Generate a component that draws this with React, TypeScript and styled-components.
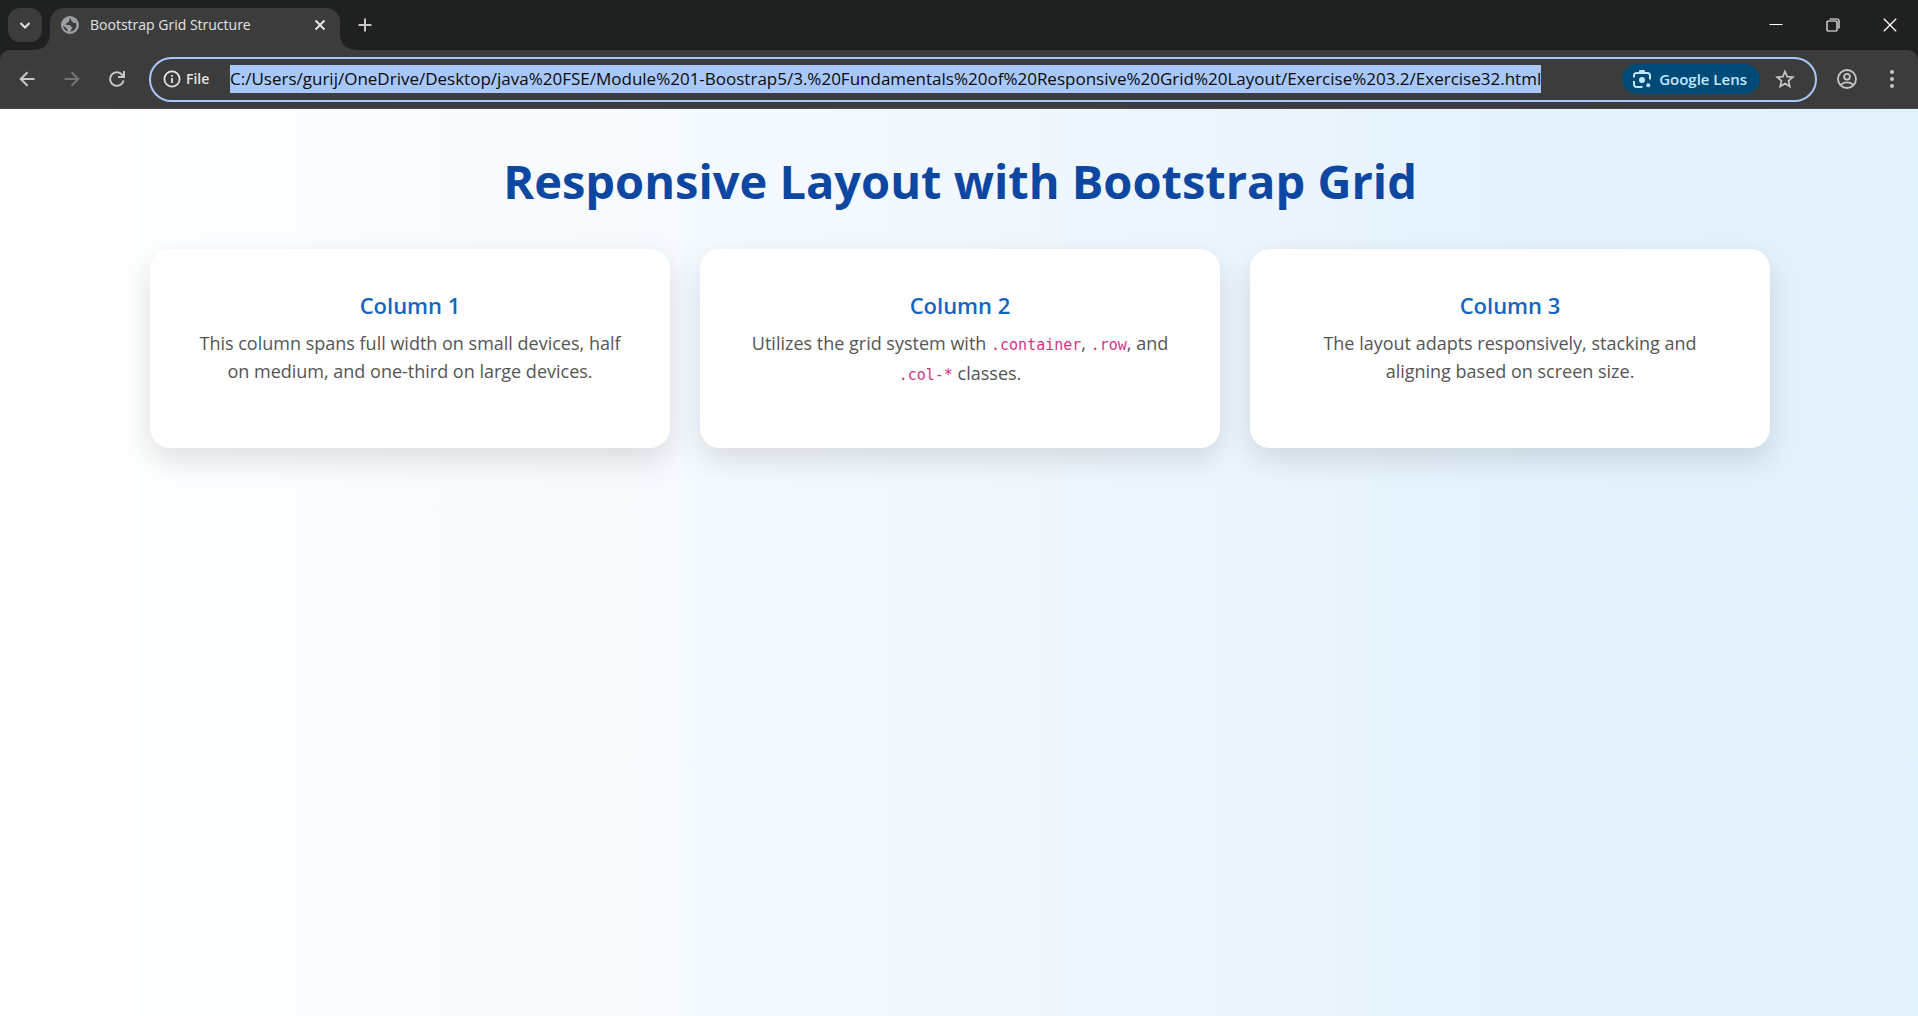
import React, { useEffect, useRef } from "react";
import styled, { createGlobalStyle } from "styled-components";

const GlobalStyle = createGlobalStyle`
  *, *::before, *::after { box-sizing: border-box; }
  html, body, #root { height: 100%; margin: 0; }
  body { font-family: "Open Sans", "Noto Sans", sans-serif; }
  h1, h2, p { margin: 0; }
`;

const Window = styled.div`
  display: flex;
  flex-direction: column;
  min-height: 100%;
`;

const TabStrip = styled.header`
  display: flex;
  align-items: flex-end;
  height: 50px;
  padding-left: 8px;
  background: #1f2120;
`;

const IconButton = styled.button<{ $size?: number; $color?: string; $bg?: string }>`
  display: flex;
  align-items: center;
  justify-content: center;
  flex: none;
  width: ${(p) => p.$size ?? 34}px;
  height: ${(p) => p.$size ?? 34}px;
  padding: 0;
  border: 0;
  border-radius: 12px;
  background: ${(p) => p.$bg ?? "transparent"};
  color: ${(p) => p.$color ?? "#c7c7c7"};
`;

const TabSearch = styled(IconButton)`
  align-self: center;
`;

const Tab = styled.div`
  position: relative;
  display: flex;
  align-items: center;
  gap: 11px;
  width: 290px;
  height: 42px;
  margin-left: 8px;
  padding: 0 8px 8px 11px;
  border-radius: 14px 14px 0 0;
  background: #3c3c3c;
  color: #e3e3e3;
  font-size: 14px;
  line-height: 20px;

  &::before,
  &::after {
    content: "";
    position: absolute;
    bottom: 0;
    width: 14px;
    height: 14px;
  }
  &::before {
    right: 100%;
    background: radial-gradient(circle at 0 0, transparent 13px, #3c3c3c 14px);
  }
  &::after {
    left: 100%;
    background: radial-gradient(circle at 100% 0, transparent 13px, #3c3c3c 14px);
  }
`;

const TabTitle = styled.span`
  flex: 1;
  white-space: nowrap;
`;

const NewTab = styled(IconButton)`
  align-self: center;
  margin-left: 8px;
`;

const WindowControls = styled.div`
  display: flex;
  align-self: stretch;
  margin-left: auto;
`;

const WindowButton = styled.button`
  display: flex;
  align-items: center;
  justify-content: center;
  width: 57px;
  padding: 0;
  border: 0;
  background: transparent;
  color: #ffffff;
`;

const Toolbar = styled.div`
  background: #1f2120;
`;

const ToolbarInner = styled.div`
  display: flex;
  align-items: center;
  gap: 11px;
  height: 59px;
  padding: 0 9px 0 10px;
  border-bottom: 1px solid #4a4a4a;
  border-radius: 10px 10px 0 0;
  background: #3c3c3c;
`;

const AddressBar = styled.div`
  display: flex;
  flex: 1;
  align-items: center;
  height: 45px;
  margin: 0 2px 0 4px;
  padding: 0 13px 0 12px;
  border: 2px solid #a8c7fa;
  border-radius: 23px;
`;

const Scheme = styled.label`
  display: flex;
  align-items: center;
  gap: 5px;
  width: 67px;
  color: #e3e3e3;
  font-size: 14px;
  font-weight: 600;
  line-height: 20px;
`;

const UrlInput = styled.input`
  flex: 1;
  min-width: 0;
  height: 28px;
  padding: 0;
  border: 0;
  outline: 0;
  background: transparent;
  color: #e3e3e3;
  font: 17px/28px "Open Sans", "Noto Sans", sans-serif;

  &::selection {
    background: #a8c7fa;
    color: #0a0a0a;
  }
`;

const LensButton = styled.button`
  display: flex;
  align-items: center;
  gap: 8px;
  height: 30px;
  padding: 0 13px 0 11px;
  border: 0;
  border-radius: 15px;
  background: #004a77;
  color: #c2e7ff;
  font: 600 15px/20px "Open Sans", "Noto Sans", sans-serif;
  white-space: nowrap;
`;

const StarButton = styled(IconButton)`
  margin-left: 8px;
`;

const Page = styled.main`
  flex: 1;
  padding: 40px 24px 40px 26px;
  background: linear-gradient(90deg, #ffffff 0%, #f1f8fe 50%, #e4f2fc 80%, #e1f1fd 100%);
`;

const Container = styled.div`
  max-width: 1620px;
  margin: 0 auto;
`;

const Title = styled.h1`
  margin-bottom: 36px;
  color: #0d47a1;
  font-size: 47px;
  font-weight: 700;
  line-height: 64px;
  text-align: center;
`;

const Row = styled.div`
  display: grid;
  grid-template-columns: repeat(auto-fit, minmax(320px, 1fr));
  gap: 30px;
`;

const Card = styled.section`
  min-height: 199px;
  padding: 40px;
  border-radius: 20px;
  background: #ffffff;
  box-shadow: 0 12px 30px rgba(0, 0, 0, 0.12);
  text-align: center;
`;

const CardTitle = styled.h2`
  margin-bottom: 8px;
  color: #1565c0;
  font-size: 22px;
  font-weight: 600;
  line-height: 32px;
`;

const CardText = styled.p`
  color: #555555;
  font-size: 18px;
  line-height: 28px;
`;

const Code = styled.code`
  color: #d63384;
  font-family: "DejaVu Sans Mono", monospace;
  font-size: 15px;
`;

const Globe = () => (
  <svg width="18" height="18" viewBox="0 0 18 18" aria-hidden="true">
    <circle cx="9" cy="9" r="9" fill="#9aa0a6" />
    <path
      d="M10 2.2C8.6 2.4 8.2 3.4 8.6 4.3c.3.8-.8 1-1.4 1.4-.5.5-.3 1.2-1 1.500-.5.3-1.500 0-1.600.9 0 .6.8.8 1.600.8h2.500c1 0 1.200.9 1.200 1.600 0 .5 1.500.3 1.500 1.200 0 .8-.8 1.100-1 1.700-.2.9-.8 1.700-1.800 2.300 3.800-.2 6.800-3.200 6.800-6.800 0-.9-.2-1.700-.5-2.400-.8.6-2 .8-2.700.2-.7-.5-.3-1.200-1-1.500-.8-.3-1.200-.5-1.200-1.300z"
      fill="#3c3c3c"
    />
    <path d="M2.200 9.500l3.700 3.200c.6.5.4 1.400.6 2.300l.4.600C4.200 14.800 2.300 12.400 2.200 9.500z" fill="#3c3c3c" />
  </svg>
);

type StrokeProps = { size: number; d: string; width?: number };

const Stroke = ({ size, d, width = 2 }: StrokeProps) => (
  <svg width={size} height={size} viewBox={`0 0 ${size} ${size}`} fill="none" stroke="currentColor" strokeWidth={width} aria-hidden="true">
    <path d={d} />
  </svg>
);

const InfoIcon = () => (
  <svg width="18" height="18" viewBox="0 0 18 18" fill="none" stroke="currentColor" strokeWidth="1.800" aria-hidden="true">
    <circle cx="9" cy="9" r="7.600" />
    <path d="M9 8v5M9 5v1.800" />
  </svg>
);

const ReloadIcon = () => (
  <svg width="18" height="18" viewBox="0 0 18 18" fill="none" stroke="currentColor" strokeWidth="2" aria-hidden="true">
    <path d="M15.500 10.500A6.800 6.800 0 1 1 14.200 4.800L16 6.700" />
    <path d="M16 1v6h-6" />
  </svg>
);

const LensIcon = () => (
  <svg width="18" height="18" viewBox="0 0 18 18" fill="none" stroke="currentColor" strokeWidth="2" aria-hidden="true">
    <path d="M1 7.500V5.500A2.500 2.500 0 0 1 3.500 3h11A2.500 2.500 0 0 1 17 5.500V9.500M1 11v3.500A2.500 2.500 0 0 0 3.500 17H9.500" />
    <path d="M5.500 3l1-3h5l1 3z" fill="currentColor" stroke="none" />
    <circle cx="9" cy="10" r="3" fill="currentColor" stroke="none" />
    <circle cx="15.300" cy="15.300" r="2" fill="currentColor" stroke="none" />
  </svg>
);

const StarIcon = () => (
  <svg width="20" height="20" viewBox="0 0 20 20" fill="none" stroke="currentColor" strokeWidth="1.700" aria-hidden="true">
    <path d="M10 2.500l2.200 5.200 5.600.5-4.300 3.700 1.300 5.500L10 14.500l-4.800 2.900 1.300-5.500-4.300-3.700 5.600-.5z" />
  </svg>
);

const ProfileIcon = () => (
  <svg width="20" height="20" viewBox="0 0 20 20" fill="none" stroke="currentColor" strokeWidth="1.800" aria-hidden="true">
    <circle cx="10" cy="10" r="9" />
    <circle cx="10" cy="7.800" r="2.900" />
    <path d="M3.800 16c3-3.600 9.400-3.600 12.400 0" />
  </svg>
);

const MenuIcon = () => (
  <svg width="20" height="20" viewBox="0 0 20 20" fill="currentColor" aria-hidden="true">
    <circle cx="10" cy="3" r="2" />
    <circle cx="10" cy="10" r="2" />
    <circle cx="10" cy="17" r="2" />
  </svg>
);

const RestoreIcon = () => (
  <svg width="14" height="14" viewBox="0 0 14 14" fill="none" stroke="currentColor" aria-hidden="true">
    <rect x="1" y="3" width="10" height="10" rx="1" strokeWidth="1.200" />
    <path d="M3.500 1H11a2 2 0 0 1 2 2v7.500" strokeWidth="1.200" />
  </svg>
);

const URL_TEXT =
  "C:/Users/gurij/OneDrive/Desktop/java%20FSE/Module%201-Boostrap5/3.%20Fundamentals%20of%20Responsive%20Grid%20Layout/Exercise%203.2/Exercise32.html";

const columns = [
  {
    title: "Column 1",
    body: "This column spans full width on small devices, half on medium, and one-third on large devices.",
  },
  {
    title: "Column 2",
    body: (
      <>
        Utilizes the grid system with <Code>.container</Code>, <Code>.row</Code>, and <Code>.col-*</Code> classes.
      </>
    ),
  },
  {
    title: "Column 3",
    body: "The layout adapts responsively, stacking and aligning based on screen size.",
  },
];

export default function App() {
  const urlRef = useRef<HTMLInputElement>(null);

  useEffect(() => {
    const input = urlRef.current;
    if (!input) return;
    input.focus();
    input.select();
    input.scrollLeft = 0;
  }, []);

  return (
    <>
      <GlobalStyle />
      <Window>
        <TabStrip>
          <TabSearch aria-label="Search tabs" $bg="#3c3c3c" $color="#e3e3e3">
            <Stroke size={12} d="M1.500 4l4.500 4.500L10.500 4" />
          </TabSearch>
          <Tab>
            <Globe />
            <TabTitle>Bootstrap Grid Structure</TabTitle>
            <IconButton aria-label="Close tab" $size={24} $color="#e3e3e3">
              <Stroke size={12} d="M1.500 1.500l9 9M10.500 1.500l-9 9" />
            </IconButton>
          </Tab>
          <NewTab aria-label="New tab">
            <Stroke size={14} d="M7 .5v13M.5 7h13" />
          </NewTab>
          <WindowControls>
            <WindowButton aria-label="Minimize">
              <Stroke size={14} d="M.5 6.500h13" width={1} />
            </WindowButton>
            <WindowButton aria-label="Restore">
              <RestoreIcon />
            </WindowButton>
            <WindowButton aria-label="Close">
              <Stroke size={14} d="M.8.8l12.400 12.400M13.200.8L.8 13.200" width={1.3} />
            </WindowButton>
          </WindowControls>
        </TabStrip>
        <Toolbar>
          <ToolbarInner>
            <IconButton aria-label="Back">
              <Stroke size={16} d="M15.500 8H2M8.500 1.200L1.700 8l6.800 6.800" />
            </IconButton>
            <IconButton aria-label="Forward" $color="#757575">
              <Stroke size={16} d="M.5 8H14M7.500 1.200L14.300 8l-6.800 6.800" />
            </IconButton>
            <IconButton aria-label="Reload">
              <ReloadIcon />
            </IconButton>
            <AddressBar>
              <Scheme htmlFor="url">
                <InfoIcon />
                File
              </Scheme>
              <UrlInput id="url" ref={urlRef} defaultValue={URL_TEXT} spellCheck={false} />
              <LensButton>
                <LensIcon />
                Google Lens
              </LensButton>
              <StarButton aria-label="Bookmark this page">
                <StarIcon />
              </StarButton>
            </AddressBar>
            <IconButton aria-label="Profile">
              <ProfileIcon />
            </IconButton>
            <IconButton aria-label="Menu">
              <MenuIcon />
            </IconButton>
          </ToolbarInner>
        </Toolbar>
        <Page>
          <Container>
            <Title>Responsive Layout with Bootstrap Grid</Title>
            <Row>
              {columns.map((column) => (
                <Card key={column.title}>
                  <CardTitle>{column.title}</CardTitle>
                  <CardText>{column.body}</CardText>
                </Card>
              ))}
            </Row>
          </Container>
        </Page>
      </Window>
    </>
  );
}
